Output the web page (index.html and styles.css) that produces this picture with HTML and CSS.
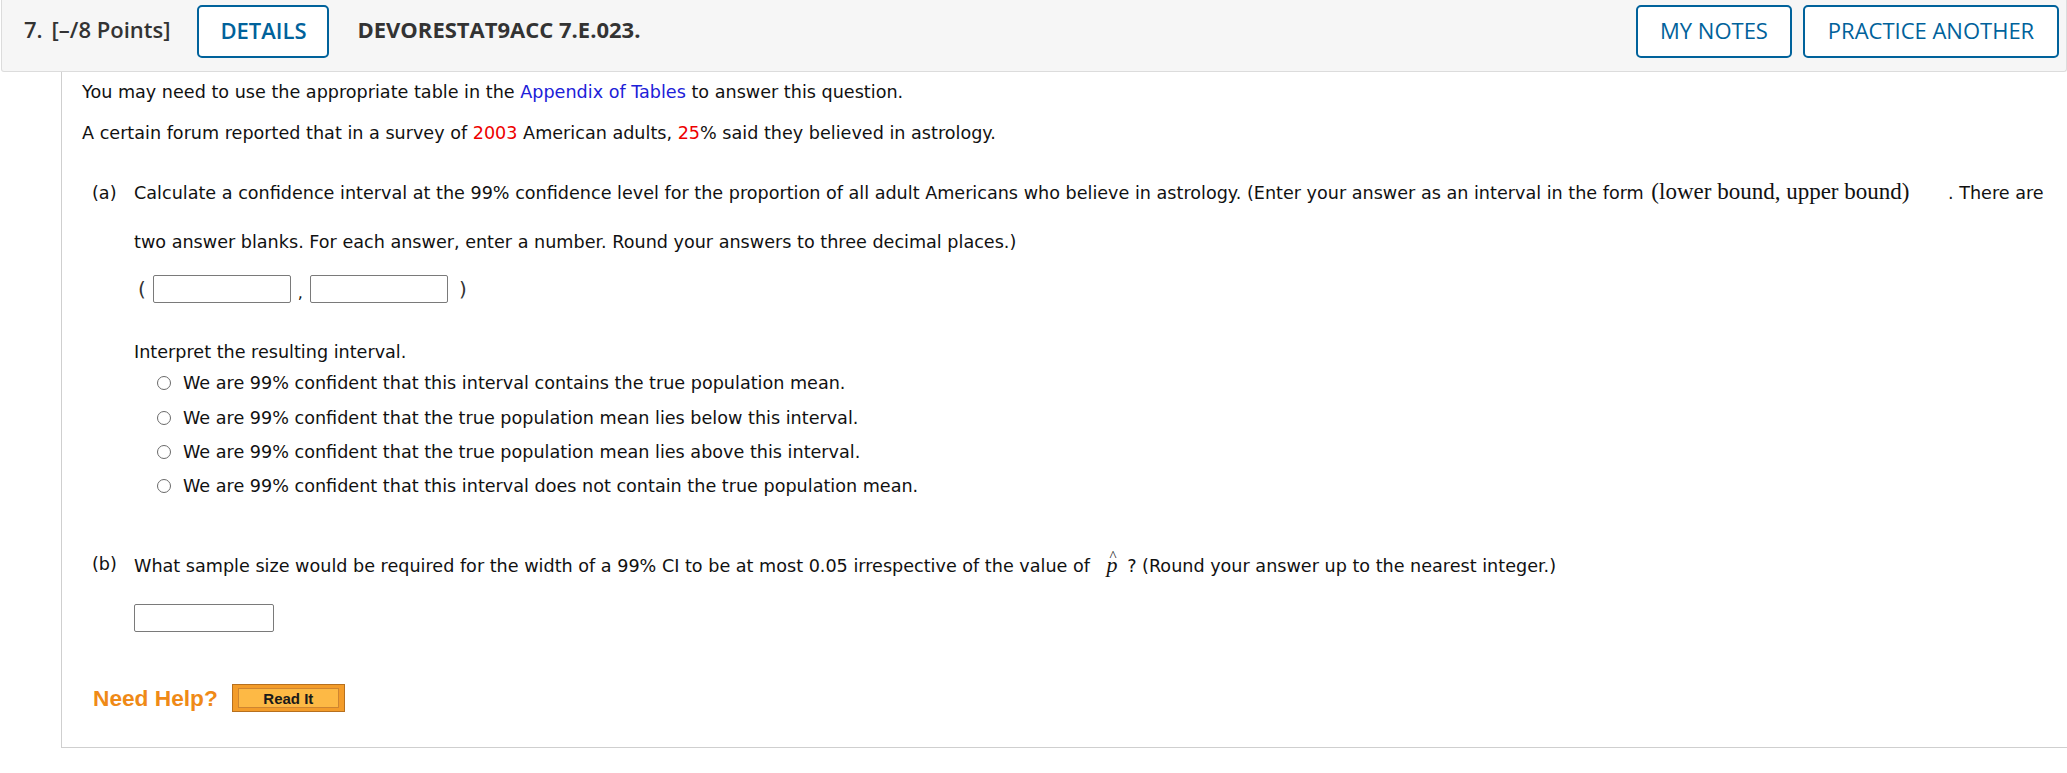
FILE: index.html
```html
<!DOCTYPE html>
<html>
<head>
<meta charset="utf-8">
<link rel="stylesheet" href="styles.css">
</head>
<body>
<div class="qhead">
  <span class="qnum">7.</span>
  <span class="qpts">[–/8 Points]</span>
  <span class="btn details">DETAILS</span>
  <span class="qid">DEVORESTAT9ACC 7.E.023.</span>
  <span class="spacer"></span>
  <span class="btn notes">MY NOTES</span>
  <span class="btn practice">PRACTICE ANOTHER</span>
</div>
<div class="qbody">
  <p class="intro1">You may need to use the appropriate table in the <span class="link">Appendix of Tables</span> to answer this question.</p>
  <p class="intro2">A certain forum reported that in a survey of <span class="red">2003</span> American adults, <span class="red">25</span>% said they believed in astrology.</p>

  <div class="part part-a">
    <div class="plabel">(a)</div>
    <div class="pcontent">
      <p class="ptext">Calculate a confidence interval at the 99% confidence level for the proportion of all adult Americans who believe in astrology. (Enter your answer as an interval in the form <span class="math">(lower bound, upper bound)</span> . There are two answer blanks. For each answer, enter a number. Round your answers to three decimal places.)</p>
      <div class="interval">
        <span class="paren open">(</span>
        <span class="box wide"></span>
        <span class="comma">,</span>
        <span class="box wide"></span>
        <span class="paren close">)</span>
      </div>
      <p class="interp">Interpret the resulting interval.</p>
      <div class="choices">
        <div class="choice"><span class="radio"></span><span>We are 99% confident that this interval contains the true population mean.</span></div>
        <div class="choice"><span class="radio"></span><span>We are 99% confident that the true population mean lies below this interval.</span></div>
        <div class="choice"><span class="radio"></span><span>We are 99% confident that the true population mean lies above this interval.</span></div>
        <div class="choice"><span class="radio"></span><span>We are 99% confident that this interval does not contain the true population mean.</span></div>
      </div>
    </div>
  </div>

  <div class="part part-b">
    <div class="plabel">(b)</div>
    <div class="pcontent">
      <p class="ptext-b">What sample size would be required for the width of a 99% CI to be at most 0.05 irrespective of the value of <span class="phat">p<span class="hat">^</span></span> ? (Round your answer up to the nearest integer.)</p>
      <span class="box single"></span>
    </div>
  </div>

  <div class="help">
    <span class="needhelp">Need Help?</span>
    <span class="readit"><span class="readit-in">Read It</span></span>
  </div>
</div>
</body>
</html>
```
FILE: styles.css
```css
html, body {
  margin: 0;
  padding: 0;
  background: #ffffff;
}
body {
  width: 2067px;
  font-family: "DejaVu Sans", Verdana, sans-serif;
  color: #111;
}
.qhead {
  box-sizing: border-box;
  height: 72px;
  margin-left: 1px;
  background: #f6f6f6;
  border: 1px solid #dcdcdc;
  border-top: none;
  border-radius: 0 0 3px 3px;
  display: flex;
  align-items: flex-start;
  padding-top: 5px;
  padding-left: 22px;
  padding-right: 7px;
  font-family: "Open Sans", sans-serif;
  font-weight: 600;
  font-size: 22px;
  color: #333;
}
.qnum, .qpts, .qid {
  line-height: 49px;
}
.qnum { margin-right: 9px; }
.qpts { margin-right: 27px; }
.qid { font-weight: 700; }
.btn {
  box-sizing: border-box;
  height: 53px;
  padding-bottom: 3px;
  display: inline-flex;
  align-items: center;
  justify-content: center;
  border: 2px solid #00629b;
  border-radius: 5px;
  background: #fff;
  color: #00629b;
  font-weight: 600;
}
.details { width: 132px; margin-right: 28px; }
.spacer { flex: 1; }
.notes { width: 156px; margin-right: 11px; font-weight: 500; }
.practice { width: 256px; font-weight: 500; }

.qbody {
  margin-left: 61px;
  border-left: 1px solid #cfcfcf;
  border-bottom: 1px solid #cfcfcf;
  padding: 10px 0 34px 20px;
  font-size: 17.6px;
}
.qbody p { margin: 0; }
.intro1 { line-height: 20px; }
.intro2 { line-height: 20px; margin-top: 21px !important; }
.link { color: #2020d8; }
.red { color: #ee0000; }

.part {
  display: flex;
  padding-left: 10px;
}
.plabel { width: 42px; flex: none; }
.pcontent { flex: 1; padding-right: 12px; }
.part-a { margin-top: 26px; }
.part-a .plabel { line-height: 49px; }
.ptext { line-height: 49px; }
.math {
  font-family: "Liberation Serif", "DejaVu Serif", serif;
  font-size: 23px;
  line-height: 1;
  margin-left: 2px;
  margin-right: 33px;
}
.interval {
  display: flex;
  align-items: center;
  height: 28px;
  margin-top: 8px;
}
.paren { font-size: 20px; color: #333; line-height: 1; }
.paren.open { margin-left: 4px; margin-right: 7px; }
.paren.close { margin-left: 11px; }
.comma { margin: 8px 7px 0 7px; font-size: 16px; line-height: 1; }
.box {
  box-sizing: border-box;
  display: inline-block;
  border: 1px solid #7a7a7a;
  border-radius: 2px;
  background: #fff;
}
.box.wide { width: 138px; height: 28px; }
.interp { line-height: 20px; margin-top: 39px !important; }
.choices { margin-top: 4px; padding-left: 23px; }
.choice {
  display: flex;
  align-items: center;
  height: 34.4px;
}
.radio {
  box-sizing: border-box;
  width: 14px;
  height: 14px;
  border: 1px solid #6a6a6a;
  border-radius: 50%;
  background: #fff;
  margin-right: 12px;
}
.part-b { margin-top: 50px; }
.part-b .plabel, .ptext-b { line-height: 20px; }
.phat {
  position: relative;
  display: inline-block;
  font-family: "Liberation Serif", "DejaVu Serif", serif;
  font-style: italic;
  font-size: 22px;
  line-height: 1;
  margin: 0 4px 0 11px;
}
.hat {
  position: absolute;
  left: 3px;
  top: -5px;
  font-style: normal;
  font-size: 15px;
}
.box.single {
  display: block;
  width: 140px;
  height: 28px;
  margin-top: 28px;
}
.help {
  display: flex;
  align-items: center;
  margin-top: 52px;
  padding-left: 11px;
  height: 29px;
}
.needhelp {
  font-family: "Liberation Sans", Arial, sans-serif;
  font-weight: bold;
  font-size: 22.7px;
  color: #ef8a17;
  margin-right: 14px;
}
.readit {
  box-sizing: border-box;
  width: 113px;
  height: 28px;
  border: 1px solid #b7701e;
  background: #f39c2a;
  padding: 3px 5px;
  display: inline-flex;
}
.readit-in {
  flex: 1;
  box-sizing: border-box;
  border: 1px solid #cf8530;
  background: #fdb945;
  font-family: "Liberation Sans", Arial, sans-serif;
  font-weight: bold;
  font-size: 15px;
  color: #1a1a1a;
  display: flex;
  align-items: center;
  justify-content: center;
}
```
